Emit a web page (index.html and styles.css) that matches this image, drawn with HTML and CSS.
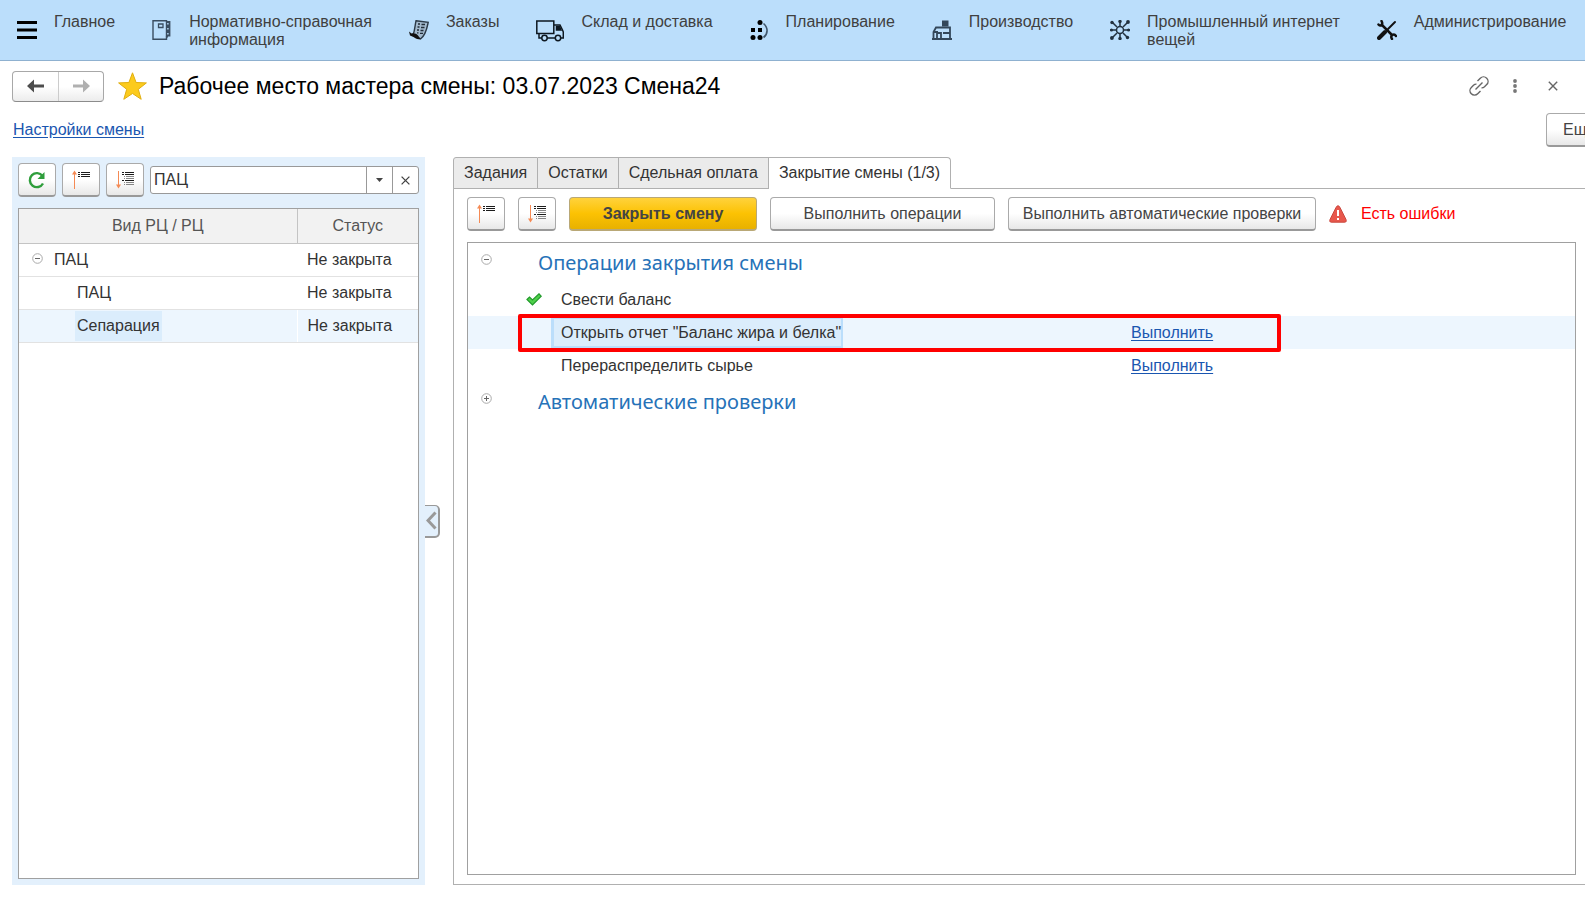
FILE: index.html
```html
<!DOCTYPE html>
<html lang="ru">
<head>
<meta charset="utf-8">
<title>Рабочее место мастера смены</title>
<link rel="stylesheet" href="styles.css">
</head>
<body>
<svg class="defs" width="0" height="0" aria-hidden="true">
  <symbol id="i-collapse" viewBox="0 0 20 20">
    <path d="M3.500 3v16" stroke="#f58a54"/><path d="M1 4.500L3.500.5 6 4.500z" fill="#f58a54"/>
    <path d="M7 2.500h2M10 2.500h9M7 4.500h2M10 4.500h9M7 6.500h2M10 6.500h9" stroke="#1c1c1c"/>
  </symbol>
  <symbol id="i-expand" viewBox="0 0 20 20">
    <path d="M3.500 1v16" stroke="#f58a54"/><path d="M1 14.500l2.500 4 2.500-4z" fill="#f58a54"/>
    <path d="M7 2.500h2M10 2.500h9M7 4.500h2M10 4.500h9M7 10.500h2M10 10.500h9" stroke="#1c1c1c"/>
    <path d="M9 6.500h1M11 6.500h8M9 8.500h1M11 8.500h8M9 12.500h1M11 12.500h8M9 14.500h1M11 14.500h8" stroke="#888"/>
  </symbol>
  <symbol id="i-minus" viewBox="0 0 11 11"><circle cx="5.500" cy="5.500" r="4.800" fill="#fff" stroke="#aaa"/><path d="M3 5.500h5" stroke="#666"/></symbol>
  <symbol id="i-plus" viewBox="0 0 11 11"><circle cx="5.500" cy="5.500" r="4.800" fill="#fff" stroke="#aaa"/><path d="M3 5.500h5M5.500 3v5" stroke="#666"/></symbol>
</svg>
<nav class="sections">
  <a class="section" href="#"><svg width="20" height="20" viewBox="0 0 20 20"><path d="M0 2.500h20M0 10h20M0 17.500h20" stroke="#000" stroke-width="3"/></svg><span>Главное</span></a>
  <a class="section" href="#"><svg width="20" height="20" viewBox="0 0 20 20" fill="none" stroke="#3a4d60"><path d="M1 .7h13.500v18.600H1z" stroke-width="1.400"/><path d="M6.500 4h4.500v3.500H6.500z" stroke-width="1.300"/><path d="M15 2h2.500v3.500h-2.500M15 7h2.500v3.500h-2.500M15 12h2.500v3.500h-2l-1 2" stroke-width="1.800"/></svg><span>Нормативно-справочная<br>информация</span></a>
  <a class="section" href="#"><svg width="20" height="20" viewBox="0 0 20 20"><path d="M7 .8l12.200 1.500C18 8 17 15 11.500 19L4 15.500C6 10 6 5 7 .8z" fill="#a3bace" stroke="#2c3a47" stroke-width="1.400"/><path d="M0 11.500l2.500 2c3-.5 5 .5 6.500 2l2.500 3.500c-3 1-5-.5-7-2L1 15.500z" fill="#111"/><path d="M9 4h2M12.500 4.500h3.500M8.500 7h2M12 7.500h3.500M8 10h2M11.500 10.500h3M8 12.800h1.500M11 13.300h3" stroke="#222d38" stroke-width="1.300"/></svg><span>Заказы</span></a>
  <a class="section" href="#"><svg width="28" height="22" viewBox="0 0 28 22" fill="none" stroke="#0d1720" stroke-width="1.500"><path d="M.8 1h17v12.500H.8zM3 13.500V18h3M11 18h8M18 5h6l2.500 5 .8 2v6h-2.500"/><path d="M20.500 6.500h3l1.500 3.500h-4.500z" fill="#0d1720"/><circle cx="8.500" cy="18" r="2.700"/><circle cx="22" cy="18" r="2.700"/></svg><span>Склад и доставка</span></a>
  <a class="section" href="#"><svg width="19" height="20" viewBox="0 0 19 20"><circle cx="10" cy="2.500" r="2.500"/><path d="M1 8h4v4H1zM8 8h4v4H8z"/><circle cx="3" cy="17.500" r="2.500"/><circle cx="10" cy="17.500" r="2.500"/><path d="M13.500 3.500C18.500 8 18 14 13.500 17.500" fill="none" stroke="#40566b" stroke-width="1.600"/></svg><span>Планирование</span></a>
  <a class="section" href="#"><svg width="20" height="20" viewBox="0 0 20 20" fill="none" stroke="#33475a" stroke-width="1.800"><path d="M1.500 19v-7L4 7.500h14V19M0 19h20M5 19v-6h4v6M1.500 12H6M11 13h7"/><path d="M10 .5h6.500v6H10z" fill="#33475a" stroke="none"/></svg><span>Производство</span></a>
  <a class="section" href="#"><svg width="20" height="20" viewBox="0 0 20 20" fill="none" stroke="#22313f" stroke-width="1.500"><circle cx="10" cy="10" r="3.500"/><path d="M10 0v6.500M10 13.500V20M0 10h6M14 10h6M2 2l5 5M18 2l-5 5M2 18l5-5M18 18l-5-5"/><g fill="#22313f" stroke="none"><circle cx="2" cy="2.500" r="1.700"/><circle cx="18" cy="2" r="1.900"/><circle cx="1.900" cy="18" r="1.900"/><circle cx="17.500" cy="17.500" r="1.700"/><circle cx="10" cy="1.500" r="1.700"/><circle cx="10" cy="18.500" r="1.700"/><circle cx="1.500" cy="10" r="1.500"/><circle cx="18.500" cy="10" r="1.500"/></g></svg><span>Промышленный интернет<br>вещей</span></a>
  <a class="section" href="#"><svg width="20" height="20" viewBox="0 0 20 20" fill="none" stroke="#111" stroke-linecap="round"><path d="M18 2l-7 7" stroke-width="2"/><path d="M8 12l-6 6" stroke-width="4"/><path d="M5 5l10 10" stroke-width="2.500"/><path d="M1.500 4.500c2 2.500 5 0 3-3.500M15 19c-2.500-3.500 2-6 4-3" stroke-width="2.500"/></svg><span>Администрирование</span></a>
</nav>
<header class="title-bar">
  <div class="history">
    <button aria-label="Назад"><svg width="17" height="14" viewBox="0 0 17 14"><path d="M0 7l7-6.500v5h10v3H7v5z" fill="#4d4d4d"/></svg></button>
    <button aria-label="Вперед"><svg width="17" height="14" viewBox="0 0 17 14"><path d="M17 7l-7-6.500v5H0v3h10v5z" fill="#b0b0b0"/></svg></button>
  </div>
  <svg class="star" width="29" height="28" viewBox="0 0 29 28"><path d="M14.500.8l3.600 9.700 10.300.4-8.100 6.400 2.900 10-8.700-5.800-8.700 5.800 2.900-10L.6 10.900l10.300-.4z" fill="#fccb1d" stroke="#e0ae10"/></svg>
  <h1>Рабочее место мастера смены: 03.07.2023 Смена24</h1>
  <div class="window-tools">
    <button aria-label="Ссылка"><svg width="20" height="20" viewBox="0 0 20 20" fill="none" stroke="#666" stroke-width="1.400"><path d="M8.500 5l2.800-2.800a4.500 4.500 0 0 1 6.400 6.400L15.500 10.800a4 4 0 0 1-3 1.100M11.500 15l-2.800 2.800a4.500 4.500 0 0 1-6.400-6.400L4.500 9.200a4 4 0 0 1 3-1.100M6.500 13.500l7-7"/></svg></button>
    <button aria-label="Меню"><svg width="6" height="14" viewBox="0 0 6 14" fill="#777"><circle cx="3" cy="2" r="1.900"/><circle cx="3" cy="7" r="1.900"/><circle cx="3" cy="12" r="1.900"/></svg></button>
    <button aria-label="Закрыть"><svg width="10" height="10" viewBox="0 0 10 10"><path d="M.8.8l8.400 8.400M9.200.8L.8 9.200" stroke="#666" stroke-width="1.400"/></svg></button>
  </div>
</header>
<div class="command-bar"><a href="#">Настройки смены</a><button class="btn more">Еще</button></div>
<main class="workspace">
  <aside class="centers">
    <div class="tools">
      <button class="btn square" aria-label="Обновить"><svg width="18" height="18" viewBox="0 0 18 18"><path d="M14.500 5A7 7 0 1 0 15 12.500" fill="none" stroke="#2f9e3c" stroke-width="2.400"/><path d="M16.500 1v7H9.500z" fill="#2f9e3c"/></svg></button>
      <button class="btn square" aria-label="Свернуть"><svg width="20" height="20"><use href="#i-collapse"/></svg></button>
      <button class="btn square" aria-label="Развернуть"><svg width="20" height="20"><use href="#i-expand"/></svg></button>
      <div class="picker">
        <input type="text" value="ПАЦ" aria-label="Вид рабочего центра">
        <button aria-label="Выбрать"><svg width="7" height="4" viewBox="0 0 7 4"><path d="M0 0h7L3.500 4z" fill="#444"/></svg></button>
        <button aria-label="Очистить"><svg width="9" height="9" viewBox="0 0 9 9"><path d="M.6.6l7.800 7.800M8.400.6L.6 8.400" stroke="#444" stroke-width="1.300"/></svg></button>
      </div>
    </div>
    <div class="list">
      <table class="tree">
        <thead><tr><th>Вид РЦ / РЦ</th><th class="status">Статус</th></tr></thead>
        <tbody>
          <tr><td class="root"><button class="toggle" aria-label="Свернуть ПАЦ"><svg width="11" height="11"><use href="#i-minus"/></svg></button>ПАЦ</td><td>Не закрыта</td></tr>
          <tr><td class="child"><span>ПАЦ</span></td><td>Не закрыта</td></tr>
          <tr class="current"><td class="child"><span>Сепарация</span></td><td>Не закрыта</td></tr>
        </tbody>
      </table>
    </div>
  </aside>
  <button class="splitter" aria-label="Скрыть панель"><svg width="11" height="19" viewBox="0 0 11 19"><path d="M9.500 1.500l-7.500 8 7.500 8" fill="none" stroke="#999" stroke-width="3"/></svg></button>
  <section class="shift">
    <div class="tabs" role="tablist">
      <button role="tab">Задания</button><button role="tab">Остатки</button><button role="tab">Сдельная оплата</button><button role="tab" class="active" aria-selected="true">Закрытие смены (1/3)</button>
    </div>
    <div class="page">
      <div class="actions">
        <button class="btn square" aria-label="Свернуть все"><svg width="20" height="20"><use href="#i-collapse"/></svg></button>
        <button class="btn square" aria-label="Развернуть все"><svg width="20" height="20"><use href="#i-expand"/></svg></button>
        <button class="btn primary">Закрыть смену</button>
        <button class="btn run">Выполнить операции</button>
        <button class="btn check">Выполнить автоматические проверки</button>
        <div class="errors"><svg width="18" height="18" viewBox="0 0 18 18"><path d="M9 .8c1 0 1.500.7 2 1.700l6 12c.6 1.500.2 2.700-1.200 2.700H2.200C.8 17.200.4 16 1 14.500l6-12C7.500 1.500 8 .8 9 .8z" fill="#e8574c" stroke="#c9473e"/><path d="M9 5v6M9 13v2" stroke="#fff" stroke-width="2"/></svg>Есть ошибки</div>
      </div>
      <div class="list">
        <table class="steps">
          <colgroup><col class="c-toggle"><col class="c-mark"><col class="c-name"><col></colgroup>
          <tbody>
            <tr class="group"><td><button class="toggle" aria-label="Свернуть группу"><svg width="11" height="11"><use href="#i-minus"/></svg></button></td><th colspan="3">Операции закрытия смены</th></tr>
            <tr><td></td><td class="mark"><svg width="16" height="13" viewBox="0 0 16 13"><path d="M1 6.500L3.500 4 6.500 7 13 .8l2.200 2.400L6.500 12z" fill="#4fd04a" stroke="#219a2b" stroke-width="1.200"/></svg></td><td class="name">Свести баланс</td><td></td></tr>
            <tr class="current"><td></td><td></td><td class="name focused"><span>Открыть отчет "Баланс жира и белка"</span></td><td><a href="#">Выполнить</a><i class="callout"></i></td></tr>
            <tr><td></td><td></td><td class="name">Перераспределить сырье</td><td><a href="#">Выполнить</a></td></tr>
            <tr class="group"><td><button class="toggle" aria-label="Развернуть группу"><svg width="11" height="11"><use href="#i-plus"/></svg></button></td><th colspan="3">Автоматические проверки</th></tr>
          </tbody>
        </table>
      </div>
    </div>
  </section>
</main>
</body>
</html>
```
FILE: styles.css
```css
* { box-sizing: border-box; }
body {
  margin: 0;
  height: 100vh;
  display: flex;
  flex-direction: column;
  overflow: hidden;
  background: #fff;
  color: #333;
  font: 16px/18px "Liberation Sans", Arial, sans-serif;
}
button, input { font: inherit; color: inherit; margin: 0; }
button { padding: 0; border: 0; background: none; display: inline-flex; align-items: center; justify-content: center; }
svg { flex: none; display: block; }
a { color: #1a56b0; text-underline-offset: 2px; }
.defs { position: absolute; }

.sections {
  flex: none;
  display: flex;
  gap: 37px;
  height: 61px;
  padding: 0 17px;
  background: #bbdefb;
  border-bottom: 1px solid #8fb1d0;
  white-space: nowrap;
}
.section { display: flex; gap: 17px; padding-top: 13px; color: #404040; text-decoration: none; }
.section svg { margin-top: 7px; }

.title-bar { display: flex; align-items: center; height: 50px; padding: 0 27px 0 12px; }
.history { display: flex; border: 1px solid #a8a8a8; border-bottom-color: #8c8c8c; border-radius: 4px; background: linear-gradient(#fff 50%, #ececec); }
.history button { width: 45px; height: 29px; }
.history button + button { border-left: 1px solid #ccc; }
.star { margin: 0 12px 0 14px; }
h1 { margin: 0; font-size: 23px; line-height: 28px; font-weight: 400; color: #000; white-space: nowrap; }
.window-tools { display: flex; align-items: center; gap: 23px; margin-left: auto; }
.window-tools button + button + button { margin-left: 7px; }

.command-bar { display: flex; align-items: center; justify-content: space-between; height: 38px; padding-left: 13px; }
.btn {
  height: 34px;
  border: 1px solid #aaa;
  border-bottom: 2px solid #999;
  border-radius: 4px;
  background: linear-gradient(#fff 50%, #e8e8e8);
  color: #444;
  white-space: nowrap;
}
.square { width: 38px; flex: none; }
.more { width: 76px; flex: none; margin-right: -37px; padding-left: 16px; justify-content: flex-start; }

.workspace { flex: 1; min-height: 0; display: flex; padding: 8px 0 14px 12px; }
.centers { flex: none; width: 413px; padding: 6px; background: #e3f0fc; display: flex; flex-direction: column; gap: 11px; }
.tools { display: flex; align-items: center; gap: 6px; }
.picker { flex: 1; display: flex; height: 28px; border: 1px solid #999; border-radius: 3px; background: #fff; overflow: hidden; }
.picker input { flex: 1; min-width: 0; border: 0; padding: 0 3px; background: none; outline: none; }
.picker button { width: 26px; border-left: 1px solid #999; }
.list { flex: 1; min-height: 0; border: 1px solid #a0a0a0; background: #fff; }

table { width: 100%; border-collapse: collapse; table-layout: fixed; }
td, th { padding: 0; text-align: left; font-weight: 400; white-space: nowrap; }
.tree th { height: 34px; text-align: center; color: #555; background: #f2f2f2; border-bottom: 1px solid #c4c4c4; }
.tree .status { width: 121px; border-left: 1px solid #c4c4c4; }
.tree td { height: 33px; border-bottom: 1px solid #e2e2e2; }
.tree td + td { padding-left: 10px; }
.tree .root { padding-left: 13px; }
.tree .toggle { margin-right: 11px; vertical-align: 1px; }
.tree .child { padding-left: 56px; }
.tree .child span { display: inline-block; padding: 6px 2px; }
.current { background: #edf6fe; }
.current .child span { background: #dbedfc; }
.current td + td { border-left: 1px solid #fff; }
.steps .current td { border: 0; }

.splitter { flex: none; align-self: center; width: 15px; height: 33px; margin-right: 13px; border: 1px solid #999; border-left: 0; border-width: 1px 2px 2px 0; border-radius: 0 5px 5px 0; background: #e3f0fc; }

.shift { flex: 1; min-width: 0; display: flex; flex-direction: column; }
.tabs { position: relative; z-index: 1; display: flex; margin-bottom: -1px; }
.tabs button { height: 32px; padding: 0 10px; border: 1px solid #b0b0b0; background: #ebebeb; color: #333; }
.tabs button + button { border-left: 0; }
.tabs button:first-child { border-radius: 3px 0 0 0; }
.tabs .active { background: #fff; border-bottom-color: #fff; border-radius: 0 4px 0 0; }
.page { flex: 1; min-height: 0; display: flex; flex-direction: column; gap: 11px; padding: 8px 9px 9px 13px; border: 1px solid #b0b0b0; border-right: 0; }
.actions { display: flex; align-items: center; gap: 13px; }
.primary { width: 188px; font-weight: 700; background: linear-gradient(#ffd23c, #fcc203 50%, #e8b100); border-color: #b9a876; }
.run { width: 225px; }
.check { width: 308px; }
.errors { display: flex; align-items: center; gap: 14px; color: #f00; }

.c-toggle { width: 37px; }
.c-mark { width: 46px; }
.c-name { width: 580px; }
.steps td { height: 33px; }
.steps .group { height: 40px; }
.steps .group td { height: 40px; vertical-align: top; padding: 8px 0 0 13px; }
.steps th { padding: 0 0 1px 33px; font: 20px/28px "Noto Sans", "Open Sans", sans-serif; color: #2672b8; }
.mark { padding-left: 21px; }
.steps .name { padding-left: 10px; }
.steps .focused { padding-left: 0; }
.focused span { display: block; width: max-content; padding: 5px 0 4px 7px; border: 3px solid #bbdefb; border-right-width: 2px; background: #dbedfc; }
.steps .current { position: relative; }
.callout { position: absolute; left: 50px; top: -2px; width: 763px; height: 38px; border: 4px solid #f00; border-radius: 2px; }
```
